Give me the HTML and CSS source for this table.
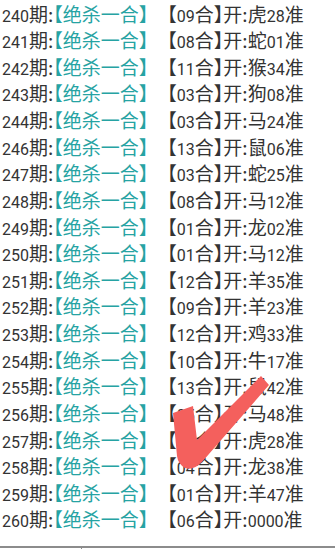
FILE: index.html
```html
<!DOCTYPE html>
<html lang="zh-CN">
<head>
<meta charset="utf-8">
<title>绝杀一合</title>
<link rel="stylesheet" href="styles.css">
</head>
<body>
<div class="page">
  <div class="list">
    <div class="row"><span class="n">240</span>期:<span class="kill"><span class="half">【</span>绝杀一合】</span>【<span class="n">09</span>合<span class="half">】</span>开:虎<span class="n">28</span>准</div>
    <div class="row"><span class="n">241</span>期:<span class="kill"><span class="half">【</span>绝杀一合】</span>【<span class="n">08</span>合<span class="half">】</span>开:蛇<span class="n">01</span>准</div>
    <div class="row"><span class="n">242</span>期:<span class="kill"><span class="half">【</span>绝杀一合】</span>【<span class="n">11</span>合<span class="half">】</span>开:猴<span class="n">34</span>准</div>
    <div class="row"><span class="n">243</span>期:<span class="kill"><span class="half">【</span>绝杀一合】</span>【<span class="n">03</span>合<span class="half">】</span>开:狗<span class="n">08</span>准</div>
    <div class="row"><span class="n">244</span>期:<span class="kill"><span class="half">【</span>绝杀一合】</span>【<span class="n">03</span>合<span class="half">】</span>开:马<span class="n">24</span>准</div>
    <div class="row"><span class="n">246</span>期:<span class="kill"><span class="half">【</span>绝杀一合】</span>【<span class="n">13</span>合<span class="half">】</span>开:鼠<span class="n">06</span>准</div>
    <div class="row"><span class="n">247</span>期:<span class="kill"><span class="half">【</span>绝杀一合】</span>【<span class="n">03</span>合<span class="half">】</span>开:蛇<span class="n">25</span>准</div>
    <div class="row"><span class="n">248</span>期:<span class="kill"><span class="half">【</span>绝杀一合】</span>【<span class="n">08</span>合<span class="half">】</span>开:马<span class="n">12</span>准</div>
    <div class="row"><span class="n">249</span>期:<span class="kill"><span class="half">【</span>绝杀一合】</span>【<span class="n">01</span>合<span class="half">】</span>开:龙<span class="n">02</span>准</div>
    <div class="row"><span class="n">250</span>期:<span class="kill"><span class="half">【</span>绝杀一合】</span>【<span class="n">01</span>合<span class="half">】</span>开:马<span class="n">12</span>准</div>
    <div class="row"><span class="n">251</span>期:<span class="kill"><span class="half">【</span>绝杀一合】</span>【<span class="n">12</span>合<span class="half">】</span>开:羊<span class="n">35</span>准</div>
    <div class="row"><span class="n">252</span>期:<span class="kill"><span class="half">【</span>绝杀一合】</span>【<span class="n">09</span>合<span class="half">】</span>开:羊<span class="n">23</span>准</div>
    <div class="row"><span class="n">253</span>期:<span class="kill"><span class="half">【</span>绝杀一合】</span>【<span class="n">12</span>合<span class="half">】</span>开:鸡<span class="n">33</span>准</div>
    <div class="row"><span class="n">254</span>期:<span class="kill"><span class="half">【</span>绝杀一合】</span>【<span class="n">10</span>合<span class="half">】</span>开:牛<span class="n">17</span>准</div>
    <div class="row"><span class="n">255</span>期:<span class="kill"><span class="half">【</span>绝杀一合】</span>【<span class="n">13</span>合<span class="half">】</span>开:鼠<span class="n">42</span>准</div>
    <div class="row"><span class="n">256</span>期:<span class="kill"><span class="half">【</span>绝杀一合】</span>【<span class="n">05</span>合<span class="half">】</span>开:马<span class="n">48</span>准</div>
    <div class="row"><span class="n">257</span>期:<span class="kill"><span class="half">【</span>绝杀一合】</span>【<span class="n">07</span>合<span class="half">】</span>开:虎<span class="n">28</span>准</div>
    <div class="row"><span class="n">258</span>期:<span class="kill"><span class="half">【</span>绝杀一合】</span>【<span class="n">04</span>合<span class="half">】</span>开:龙<span class="n">38</span>准</div>
    <div class="row"><span class="n">259</span>期:<span class="kill"><span class="half">【</span>绝杀一合】</span>【<span class="n">01</span>合<span class="half">】</span>开:羊<span class="n">47</span>准</div>
    <div class="row"><span class="n">260</span>期:<span class="kill"><span class="half">【</span>绝杀一合】</span>【<span class="n">06</span>合<span class="half">】</span>开:<span class="n">0000</span>准</div>
  </div>
  <div class="tbl">
    <div class="cell first"></div>
    <div class="cell"></div>
  </div>
  <svg class="check" width="335" height="549" viewBox="0 0 335 549" aria-hidden="true">
    <path d="M173,413 L193,406 L197,440 L261,376 L269,385 L202,462 Q193,471 185,468 Q178,464 177,456 Z" fill="#f4605d"/>
  </svg>
</div>
</body>
</html>
```
FILE: styles.css
```css
html, body {
  margin: 0;
  padding: 0;
  background: #ffffff;
}

.page {
  position: relative;
  width: 335px;
  height: 549px;
  overflow: hidden;
}

.list {
  padding: 0.5px 0 0 2px;
  font-family: "Noto Sans CJK SC", "Roboto", sans-serif;
  font-size: 19px;
  color: #333333;
  text-spacing-trim: space-all;
}

.row {
  height: 26.63px;
  line-height: 26.63px;
  white-space: nowrap;
}

.n {
  font-family: "Roboto", "Noto Sans CJK SC", sans-serif;
  font-size: 16px;
}

.kill {
  color: #26a3a3;
}

.half {
  font-feature-settings: "halt" 1;
}

.tbl {
  display: flex;
  margin-top: 13px;
  height: 12px;
  border-top: 2px solid #8c8c8c;
}

.cell {
  flex: 1;
}

.cell.first {
  flex: 0 0 81px;
  border-right: 1px solid #8c8c8c;
}

.check {
  position: absolute;
  left: 0;
  top: 0;
  pointer-events: none;
}
```
